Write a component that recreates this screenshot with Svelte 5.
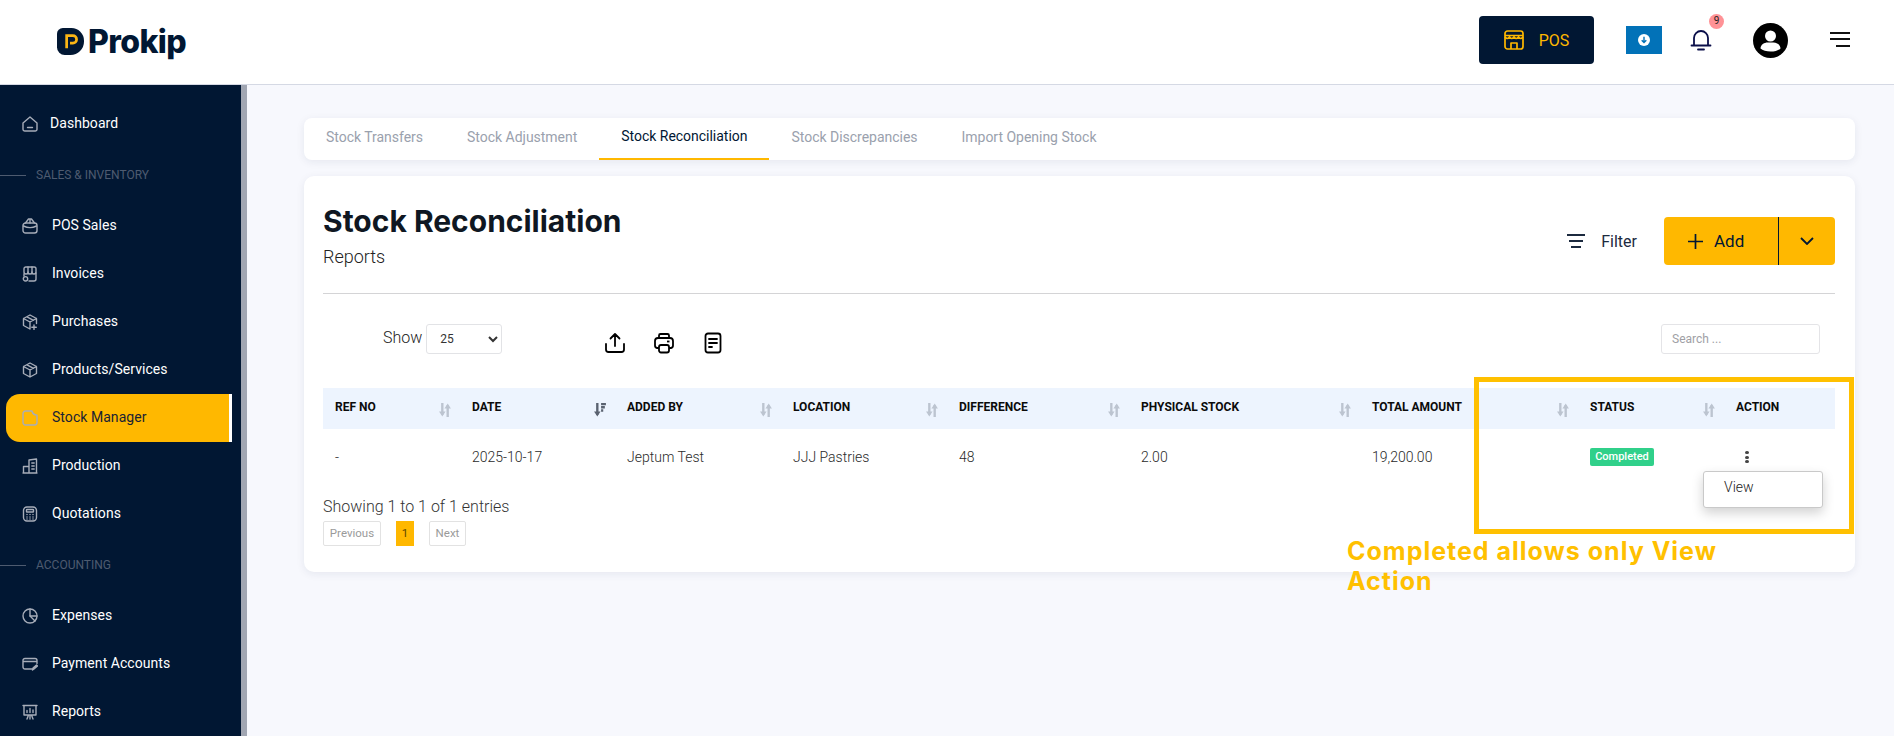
<script>
  const groups = [
    { items: [{ label: "Dashboard", icon: "home" }] },
    {
      title: "SALES & INVENTORY",
      items: [
        { label: "POS Sales", icon: "bag" },
        { label: "Invoices", icon: "store" },
        { label: "Purchases", icon: "boxplus" },
        { label: "Products/Services", icon: "box" },
        { label: "Stock Manager", icon: "note", active: true },
        { label: "Production", icon: "building" },
        { label: "Quotations", icon: "calc" },
      ],
    },
    {
      title: "ACCOUNTING",
      items: [
        { label: "Expenses", icon: "pie" },
        { label: "Payment Accounts", icon: "card" },
        { label: "Reports", icon: "board" },
      ],
    },
  ];

  const tabs = ["Stock Transfers", "Stock Adjustment", "Stock Reconciliation", "Stock Discrepancies", "Import Opening Stock"];

  const columns = [
    { label: "REF NO", width: 137 },
    { label: "DATE", width: 155, sorted: true },
    { label: "ADDED BY", width: 166 },
    { label: "LOCATION", width: 166 },
    { label: "DIFFERENCE", width: 182 },
    { label: "PHYSICAL STOCK", width: 231 },
    { label: "TOTAL AMOUNT", width: 218 },
    { label: "STATUS", width: 146 },
    { label: "ACTION", width: 111, plain: true },
  ];

  const row = ["-", "2025-10-17", "Jeptum Test", "JJJ Pastries", "48", "2.00", "19,200.00"];
</script>

{#snippet navIcon(name)}
  <svg class="nav-icon" viewBox="0 0 16 16" fill="none" stroke="currentColor" stroke-width="1.4" stroke-linejoin="round" stroke-linecap="round">
    {#if name === "home"}
      <path d="M1 7 8 1l7 6v6.200A1.800 1.800 0 0 1 13.200 15H2.800A1.800 1.800 0 0 1 1 13.200Z" /><path d="M5.500 11.500h5" />
    {:else if name === "bag"}
      <path d="M3.500 5h9A2.500 2.500 0 0 1 15 7.500v5a2.500 2.500 0 0 1-2.500 2.500h-9A2.500 2.500 0 0 1 1 12.500v-5A2.500 2.500 0 0 1 3.500 5Z" /><path d="M3.500 5 6.500 1h3l3 4M1.500 8c4 2 9 2 13 0M8 1.500V5" />
    {:else if name === "store"}
      <path d="M2 6V2.800A1.800 1.800 0 0 1 3.800 1h8.400A1.800 1.800 0 0 1 14 2.800V6a2 2 0 0 1-4 0 2 2 0 0 1-4 0 2 2 0 0 1-4 0Z" /><path d="M6 1v5M10 1v5M14 7v6a2 2 0 0 1-2 2H7M2 8v2" /><circle cx="3.500" cy="12.800" r="2.200" />
    {:else if name === "boxplus"}
      <path d="M8 1 14.500 4.500v5M8 1 1.500 4.500v7L8 15M1.500 4.500 8 8l6.500-3.500M8 8v7M5 2.800l6.500 3.500" /><path d="M12 11v4.500M9.800 13.200h4.500" />
    {:else if name === "box"}
      <path d="M8 1 14.500 4.500v7L8 15l-6.500-3.500v-7ZM1.500 4.500 8 8l6.500-3.500M8 8v7M5 2.800l6.500 3.500" />
    {:else if name === "note"}
      <path d="M3.500 1H10c.5 2.500 2 4 5 4.200V12.500A2.500 2.500 0 0 1 12.500 15h-9A2.500 2.500 0 0 1 1 12.500v-9A2.500 2.500 0 0 1 3.500 1Z" />
    {:else if name === "building"}
      <path d="M1 15h14M7 15V2l7.500-1v14M1.500 15V8.500H7M9.800 5h2.400M9.800 8h2.400M9.800 11h2.400" />
    {:else if name === "calc"}
      <rect x="1.500" y="1" width="13" height="14" rx="3.500" /><rect x="4.500" y="3.500" width="7" height="2.500" rx=".5" /><path d="M5 8.500h.01M8 8.500h.01M11 8.500h.01M5 11h.01M8 11h.01M11 11h.01M5 13h.01M8 13h.01M11 13h.01" stroke-width="1.500" />
    {:else if name === "pie"}
      <circle cx="8" cy="8" r="7" /><path d="M8 1v7l5 5" /><path d="M8 8h7" />
    {:else if name === "card"}
      <path d="M10 13H3a2 2 0 0 1-2-2V4.500a2 2 0 0 1 2-2h10a2 2 0 0 1 2 2v3M1 5.500h14" /><path d="m10.500 14 .5-2 3.500-3 1 1-3.500 3Z" fill="currentColor" />
    {:else}
      <path d="M1 1.500h14M2 1.500v9.500h12V1.500M5 15l1.500-4M11 15l-1.500-4M8 11v4M5 8.500V6.500M8 8.500V4.500M11 8.500V6" />
    {/if}
  </svg>
{/snippet}

{#snippet sortIcon(sorted)}
  <svg class="sort" class:sorted viewBox="0 0 11 13" fill="none" stroke="currentColor" stroke-width="2.200">
    {#if sorted}
      <path d="M3 0v11" /><path d="M0 8h6l-3 4.500Z" fill="currentColor" stroke="none" />
      <path d="M6.500 1h4.500M6.500 4h3.500M6.500 7h2" />
    {:else}
      <path d="M3 0v11" /><path d="M0 8h6l-3 4.500Z" fill="currentColor" stroke="none" />
      <path d="M8 13V2" /><path d="M5 5h6L8 .5Z" fill="currentColor" stroke="none" />
    {/if}
  </svg>
{/snippet}

<div class="page">
  <header class="topbar">
    <div class="logo">
      <svg class="logo-mark" viewBox="0 0 28 28">
        <path d="M6 0h9a13 13 0 0 1 13 13v1a14 14 0 0 1-14 14H8a8 8 0 0 1-8-8V6a6 6 0 0 1 6-6Z" fill="#011733" />
        <path d="M10 21V8h6.500a3.800 3.800 0 0 1 0 7.600H13.500" fill="none" stroke="#fbb615" stroke-width="2.800" />
      </svg>
      <span class="logo-text">Prokip</span>
    </div>
    <div class="top-actions">
      <button class="pos-btn">
        <svg viewBox="0 0 20 20" width="20" height="20" fill="none" stroke="#ffb800" stroke-width="1.700" stroke-linejoin="round">
          <rect x="1" y="1" width="18" height="18" rx="2.500" />
          <path d="M1 5.500h18M1 7c1.500 2 3 2 4.500 0 1.500 2 3 2 4.500 0 1.500 2 3 2 4.500 0 1.500 2 3 2 4.500 0M7 19v-6h6v6" />
        </svg>
        <span>POS</span>
      </button>
      <div class="download">
        <svg viewBox="0 0 12 12" width="12" height="12">
          <circle cx="6" cy="6" r="6" fill="#fff" />
          <path d="M6 2.800v5.600M3.700 6.200 6 8.500l2.300-2.300" fill="none" stroke="#0272b8" stroke-width="1.400" />
        </svg>
      </div>
      <div class="bell">
        <svg viewBox="0 0 22 22" width="22" height="22" fill="none" stroke="#0b0f4a" stroke-width="1.800" stroke-linecap="round">
          <path d="M4 16V9a7 7 0 0 1 14 0v7M1.500 16.500h19M8 20.500h6" />
        </svg>
        <span class="badge">9</span>
      </div>
      <svg class="avatar" viewBox="0 0 35 35" width="35" height="35">
        <circle cx="17.500" cy="17.500" r="17.500" fill="#000" />
        <circle cx="17.500" cy="13" r="5.500" fill="#fff" />
        <path d="M7.500 25.500c0-4 4-6 7-6h6c3 0 7 2 7 6-2 2-6 3-10 3s-8-1-10-3Z" fill="#fff" />
      </svg>
      <div class="burger"><i></i><i></i><i></i></div>
    </div>
  </header>

  <div class="body-row">
    <aside class="sidebar">
      {#each groups as group}
        {#if group.title}
          <div class="section"><span class="section-line"></span>{group.title}</div>
        {/if}
        {#each group.items as item}
          <div class="nav-item" class:active={item.active} class:tight={item.icon === "home"}>
            {@render navIcon(item.icon)}
            <span>{item.label}</span>
          </div>
        {/each}
      {/each}
    </aside>

    <main class="content">
      <nav class="tabs">
        {#each tabs as tab, i}
          <span class="tab" class:current={i === 2}>{tab}</span>
        {/each}
      </nav>

      <section class="card">
        <div class="card-head">
          <div>
            <h1>Stock Reconciliation</h1>
            <p>Reports</p>
          </div>
          <div class="head-actions">
            <div class="filter">
              <div class="filter-icon"><i></i><i></i><i></i></div>
              <span>Filter</span>
            </div>
            <div class="add-btn">
              <div class="add-main">
                <svg viewBox="0 0 15 15" width="15" height="15" stroke="#011733" stroke-width="1.700"><path d="M7.500 0v15M0 7.500h15" /></svg>
                <span>Add</span>
              </div>
              <div class="add-more">
                <svg viewBox="0 0 14 8" width="14" height="8" fill="none" stroke="#011733" stroke-width="1.800"><path d="m1 1 6 6 6-6" /></svg>
              </div>
            </div>
          </div>
        </div>

        <div class="toolbar">
          <label class="show"><span>Show</span>
            <select><option>25</option></select>
          </label>
          <div class="tool-icons">
            <svg viewBox="0 0 22 22" width="22" height="22" fill="none" stroke="#000" stroke-width="1.800" stroke-linecap="round" stroke-linejoin="round">
              <path d="M11 14V2M6.500 6.500 11 2l4.500 4.500M2 12v5.500A2.500 2.500 0 0 0 4.500 20h13a2.500 2.500 0 0 0 2.500-2.500V12" />
            </svg>
            <svg viewBox="0 0 22 22" width="22" height="22" fill="none" stroke="#000" stroke-width="1.800" stroke-linejoin="round">
              <path d="M6 6V3.500A1.500 1.500 0 0 1 7.500 2h7A1.500 1.500 0 0 1 16 3.500V6M6 16H4a2.500 2.500 0 0 1-2-2.500V9a3 3 0 0 1 3-3h12a3 3 0 0 1 3 3v4.500A2.500 2.500 0 0 1 18 16h-2" />
              <rect x="6" y="13" width="10" height="7.500" rx="2" /><path d="M14 9.500h2.500" />
            </svg>
            <svg viewBox="0 0 22 22" width="22" height="22" fill="none" stroke="#000" stroke-width="1.800" stroke-linecap="round">
              <rect x="3.500" y="1.500" width="15" height="19" rx="2.500" /><path d="M7 7h8M7 11h8M7 15h3" />
            </svg>
          </div>
          <input class="search" placeholder="Search ..." />
        </div>

        <table>
          <colgroup>
            {#each columns as col}<col style:width="{col.width}px" />{/each}
          </colgroup>
          <thead>
            <tr>
              {#each columns as col}
                <th>
                  <div class="th-inner">
                    <span>{col.label}</span>
                    {#if !col.plain}{@render sortIcon(col.sorted)}{/if}
                  </div>
                </th>
              {/each}
            </tr>
          </thead>
          <tbody>
            <tr>
              {#each row as cell}<td>{cell}</td>{/each}
              <td><span class="status">Completed</span></td>
              <td class="action-cell">
                <div class="dots"><i></i><i></i><i></i></div>
                <div class="menu">View</div>
              </td>
            </tr>
          </tbody>
        </table>

        <div class="entries">Showing 1 to 1 of 1 entries</div>
        <div class="pager">
          <span class="pg prev">Previous</span>
          <span class="pg num">1</span>
          <span class="pg next">Next</span>
        </div>
      </section>
    </main>
  </div>

  <!-- Anmerkung aus dem Screenshot, liegt über der Tabelle -->
  <div class="callout"></div>
  <div class="callout-text">Completed allows only View Action</div>
</div>

<style>
  :global(body) {
    margin: 0;
    background: #f7f8fd;
  }
  .page {
    position: relative;
    width: 1894px;
    height: 736px;
    overflow: hidden;
    font-family: Roboto, "Liberation Sans", sans-serif;
    color: #111827;
  }
  i {
    display: block;
  }

  /* Kopfzeile */
  .topbar {
    height: 84px;
    background: #fff;
    border-bottom: 1px solid #d5d9e4;
    display: flex;
    align-items: center;
    justify-content: space-between;
  }
  .logo {
    display: flex;
    align-items: center;
    gap: 4px;
    margin-left: 57px;
    margin-top: -1px;
  }
  .logo-mark {
    width: 27px;
    height: 27px;
  }
  .logo-text {
    font-family: Inter, sans-serif;
    font-weight: 800;
    font-size: 32px;
    letter-spacing: -0.6px;
    color: #011733;
    line-height: 36px;
  }
  .top-actions {
    display: flex;
    align-items: center;
    margin-right: 44px;
    margin-top: -4px;
  }
  .pos-btn {
    width: 115px;
    height: 48px;
    border: 0;
    border-radius: 4px;
    background: #011733;
    color: #ffb800;
    font-family: inherit;
    font-size: 16px;
    display: flex;
    align-items: center;
    justify-content: center;
    gap: 15px;
    padding: 0;
  }
  .download {
    width: 36px;
    height: 28px;
    margin-left: 32px;
    background: #0272b8;
    display: flex;
    align-items: center;
    justify-content: center;
  }
  .bell {
    position: relative;
    margin-left: 28px;
    height: 22px;
  }
  .badge {
    position: absolute;
    top: -15px;
    left: 19px;
    width: 15px;
    height: 15px;
    border-radius: 50%;
    background: #ff9296;
    font-size: 10px;
    line-height: 13px;
    text-align: center;
    color: #222;
  }
  .avatar {
    margin-left: 41px;
  }
  .burger {
    margin-left: 42px;
    margin-top: -2px;
    width: 20px;
    display: flex;
    flex-direction: column;
    align-items: flex-end;
    gap: 4.500px;
  }
  .burger i {
    height: 2px;
    width: 20px;
    background: #111;
  }
  .burger i:last-child {
    width: 14px;
  }

  .body-row {
    display: flex;
    height: 651px;
  }

  /* Seitenleiste */
  .sidebar {
    width: 241px;
    flex: none;
    background: #011733;
    border-right: 6px solid #a1a6b2;
    padding-top: 15px;
    box-sizing: content-box;
  }
  .nav-item {
    height: 48px;
    margin: 0 9px 0 6px;
    padding-left: 16px;
    display: flex;
    align-items: center;
    gap: 14px;
    color: #fff;
    font-size: 14px;
    letter-spacing: 0.05px;
    border-radius: 14px 0 0 14px;
    box-sizing: border-box;
  }
  .nav-item span {
    margin-top: -3px;
  }
  .nav-item.tight {
    gap: 12px;
  }
  .nav-item.active {
    background: #ffb800;
    color: #1a2233;
    border-right: 3px solid #fff;
  }
  .nav-icon {
    width: 16px;
    height: 16px;
    flex: none;
    color: #a7adb9;
  }
  .section {
    height: 54px;
    display: flex;
    align-items: center;
    gap: 10px;
    font-size: 12px;
    color: #4e5b70;
  }
  .section-line {
    width: 26px;
    height: 1px;
    background: #4e5b70;
  }

  /* Inhalt */
  .content {
    flex: 1;
    padding: 33px 39px 0 57px;
    min-width: 0;
  }
  .tabs {
    height: 42px;
    background: #fff;
    border-radius: 8px;
    box-shadow: 0 2px 8px rgba(30, 40, 80, 0.08);
    display: flex;
  }
  .tab {
    padding: 0 22px;
    font-size: 14px;
    letter-spacing: -0.02px;
    line-height: 38px;
    color: #9aa1ad;
    height: 42px;
    box-sizing: border-box;
  }
  .tab.current {
    color: #011733;
    line-height: 36px;
    border-bottom: 2px solid #ffb800;
  }
  .card {
    position: relative;
    height: 396px;
    margin-top: 16px;
    background: #fff;
    border-radius: 10px;
    box-shadow: 0 2px 8px rgba(30, 40, 80, 0.08);
    padding: 0 20px 0 19px;
    box-sizing: border-box;
  }
  .card-head {
    height: 117px;
    border-bottom: 1px solid #d4d4d6;
    display: flex;
    justify-content: space-between;
    box-sizing: content-box;
  }
  h1 {
    margin: 27px 0 0;
    font-family: Inter, sans-serif;
    font-weight: 700;
    font-size: 30px;
    line-height: 36px;
    color: #0f1722;
  }
  .card-head p {
    margin: 6px 0 0;
    font-size: 18px;
    font-weight: 300;
    line-height: 24px;
    color: #222;
  }
  .head-actions {
    display: flex;
    align-items: flex-start;
    padding-top: 41px;
  }
  .filter {
    display: flex;
    align-items: center;
    gap: 16px;
    height: 48px;
    margin-right: 27px;
    font-size: 16px;
    color: #1c2a3f;
  }
  .filter-icon {
    width: 18px;
    display: flex;
    flex-direction: column;
    align-items: center;
    gap: 4px;
  }
  .filter-icon i {
    height: 2px;
    width: 18px;
    background: #1c2a3f;
  }
  .filter-icon i:nth-child(2) {
    width: 14px;
  }
  .filter-icon i:nth-child(3) {
    width: 10px;
  }
  .add-btn {
    width: 171px;
    height: 48px;
    background: #ffb800;
    border-radius: 4px;
    display: flex;
    font-size: 17px;
    color: #011733;
  }
  .add-main {
    width: 115px;
    display: flex;
    align-items: center;
    gap: 11px;
    padding-left: 24px;
    box-sizing: border-box;
    border-right: 1px solid #011733;
  }
  .add-more {
    flex: 1;
    display: flex;
    align-items: center;
    justify-content: center;
  }
  .toolbar {
    display: flex;
    align-items: center;
    height: 30px;
    margin-top: 30px;
    padding: 0 15px 0 60px;
  }
  .show {
    display: flex;
    align-items: center;
    gap: 4px;
    font-size: 16px;
    font-weight: 300;
    color: #222;
  }
  .show span {
    margin-top: -4px;
  }
  select {
    width: 76px;
    height: 30px;
    background: #fff;
    border: 1px solid #e2e3e6;
    border-radius: 3px;
    font-family: inherit;
    font-size: 12px;
    color: #333;
    padding-left: 9px;
  }
  .tool-icons {
    display: flex;
    gap: 27px;
    margin-left: 102px;
    margin-top: 8px;
  }
  .search {
    margin-left: auto;
    width: 159px;
    height: 30px;
    box-sizing: border-box;
    border: 1px solid #e4e4e7;
    border-radius: 3px;
    padding: 0 10px;
    font-family: inherit;
    font-size: 12px;
  }
  .search::placeholder {
    color: #a0a0a5;
  }
  table {
    width: 1512px;
    margin-top: 34px;
    table-layout: fixed;
    border-collapse: collapse;
  }
  thead tr {
    background: #edf4fe;
  }
  th {
    height: 41px;
    padding: 0 0 0 12px;
    font-size: 12px;
    font-weight: 700;
    text-align: left;
    color: #0b0b0b;
  }
  .th-inner {
    display: flex;
    justify-content: space-between;
    align-items: center;
    padding-right: 9px;
  }
  .th-inner span {
    margin-top: -3px;
  }
  .sort {
    width: 12px;
    height: 14px;
    color: #bcc4d0;
    margin-top: 3px;
  }
  .sort.sorted {
    color: #5a6270;
  }
  td {
    height: 56px;
    padding: 0 0 0 12px;
    font-size: 14px;
    font-weight: 300;
    color: #2a2a2a;
  }
  .status {
    display: inline-block;
    width: 64px;
    height: 18px;
    line-height: 18px;
    border-radius: 2px;
    background: #30d08a;
    color: #fff;
    font-size: 11px;
    font-weight: 500;
    text-align: center;
    vertical-align: middle;
  }
  .action-cell {
    position: relative;
  }
  .dots {
    width: 4px;
    margin-left: 9px;
    display: flex;
    flex-direction: column;
    gap: 1.500px;
  }
  .dots i {
    width: 3.500px;
    height: 3px;
    border-radius: 50%;
    background: #444;
  }
  .menu {
    position: absolute;
    top: 42px;
    left: -21px;
    width: 120px;
    height: 37px;
    box-sizing: border-box;
    background: #fff;
    border: 1px solid #c9c9c9;
    border-radius: 3px;
    box-shadow: 0 5px 12px rgba(0, 0, 0, 0.18);
    padding: 7px 0 0 20px;
    font-size: 14px;
    line-height: 17px;
    color: #222;
  }
  .entries {
    margin-top: 12px;
    font-size: 16px;
    font-weight: 300;
    line-height: 20px;
    color: #333;
    width: 300px;
  }
  .pager {
    display: flex;
    gap: 15px;
    margin-top: 4px;
  }
  .pg {
    height: 25px;
    line-height: 23px;
    font-size: 11.500px;
    text-align: center;
    box-sizing: border-box;
    border: 1px solid #e2e2e2;
    border-radius: 2px;
    color: #9a9a9a;
  }
  .prev {
    width: 58px;
  }
  .next {
    width: 37px;
  }
  .num {
    width: 18px;
    background: #ffb800;
    border-color: #ffb800;
    border-radius: 0;
    color: #5c4700;
  }

  /* Anmerkung */
  .callout {
    position: absolute;
    left: 1474px;
    top: 377px;
    width: 380px;
    height: 157px;
    box-sizing: border-box;
    border: 5px solid #ffc000;
  }
  .callout-text {
    position: absolute;
    left: 1347px;
    top: 536px;
    width: 420px;
    font-family: Inter, sans-serif;
    font-weight: 700;
    font-size: 25px;
    letter-spacing: 1px;
    line-height: 30px;
    color: #ffc000;
  }
</style>
